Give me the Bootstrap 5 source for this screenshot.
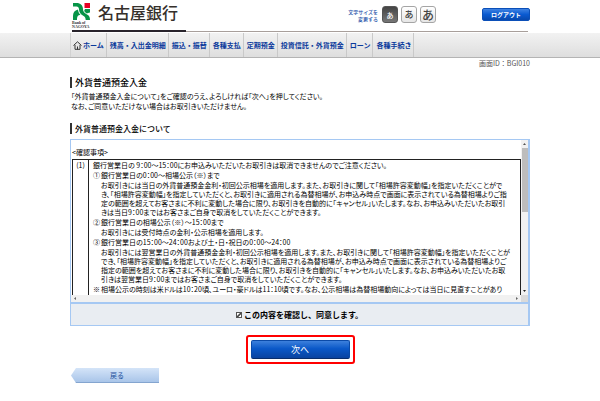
<!DOCTYPE html>
<html lang="ja">
<head>
<meta charset="utf-8">
<meta name="viewport" content="width=device-width, initial-scale=1">
<title>外貨普通預金入金</title>
<link href="https://cdn.jsdelivr.net/npm/bootstrap@5.3.0/dist/css/bootstrap.min.css" rel="stylesheet">
<style>
body{font-family:"Noto Sans CJK JP",sans-serif;font-size:7px;line-height:9px;color:#000;background:#fff}
.page-width{width:100%;max-width:460px;margin:0 auto}
.site-head{height:30px;padding:0 0 0 2px}
.bank-logo{color:#35302b;text-decoration:none;gap:5px;padding-top:2px}
.bank-name{font-size:16px;line-height:20px;font-weight:500}
.logo-mark{width:21px}
.logo-sub{font:700 4px/4px "Liberation Serif",serif;color:#333;margin-top:1px}
.rule{height:2px;margin:0 2px;background:linear-gradient(#a89f9b,#a89f9b) 0 1px/100% 1px no-repeat}
.rule div{height:2px;width:25%;background:#29242c}
.head-tools{margin-right:46px;gap:3px;padding-top:2px}
.size-label{font-size:5px;line-height:7px;color:#1c4fa8;text-align:right;margin:2px 1px 0 0;font-weight:500}
.size-btn{width:16px;height:17px;border:1px solid #a5a5a5;border-radius:3px;background:linear-gradient(#fff,#e6e6e6);color:#444;padding:0;line-height:14px;font-weight:500}
.size-s{font-size:7px;background:linear-gradient(#444,#777);color:#fff;border-color:#555}
.size-m{font-size:9px}.size-l{font-size:12px}
.logout{width:48px;height:13px;border:1px solid #0b4fb8;border-radius:2px;background:linear-gradient(#3f83e3,#0a5ad0 50%,#0848ad);color:#fff;font-size:6px;line-height:10px;font-weight:700;padding:0}
.main-nav{height:25px;margin-top:1px;background:linear-gradient(#f2f2f2,#dedede);border-bottom:1px solid #b4b4b4}
.main-nav ul{border-left:1px solid #d2d2d2}
.main-nav a{display:flex;align-items:center;height:24px;padding:0 2px 0 3px;border-right:1px solid #c9c9c9;color:#0b3a9c;font-weight:700;white-space:nowrap;text-decoration:none}
.main-nav a.home{padding:0 2px}
.main-nav a svg{margin-right:1px}
.screen-id{text-align:right;font-size:7px;color:#555;padding-top:1px}
.bar-title{border-left:2px solid #333;padding-left:3px;margin:0;font-weight:400;line-height:11px}
.title-lg{font-size:9px;margin-top:9px;font-weight:500}
.title-md{font-size:8px;margin-top:12px;font-weight:500}
.snug{font-feature-settings:"palt"}
.intro{margin:3px 0 0 1px;line-height:10px}
.agree-box{border:1px solid #a5c8f3;margin-top:5px;border-right-width:2px}
.terms{display:grid;grid-template-columns:minmax(0,1fr) 7px;grid-template-rows:155px 7px}
.terms-view{overflow:hidden;padding:8px 0 0 1px}
.terms-table{width:100%;border-collapse:collapse;margin-top:2px}
.terms-table td,.terms-table th{border:1px solid #222;border-width:1px 1px 0;vertical-align:top;padding:1px 4px;font-weight:400}
.terms-table th{width:16px;padding:1px;text-align:center}
.term-lines{display:flex;flex-direction:column;gap:1px;white-space:nowrap}
.term-lines p{margin:0}
.numbered{display:flex}
.numbered span{width:8px}
.inset{padding-left:8px}
.vbar{background:#f1f1f1;display:flex;flex-direction:column;align-items:center;gap:3px;padding:3px 0}
.vbar .thumb{width:6px;height:64px;background:#bdbdbd}
.hbar{background:#f1f1f1;display:flex;align-items:center;justify-content:space-between;padding:0 3px}
.corner{background:#dadada}
.consent{height:23px;border-top:2px solid #a5c8f3;background:#e9edf2;font-size:8px;font-weight:700;gap:2px}
.consent input{appearance:none;width:6px;height:6px;margin:0;border:1px solid #555;background:#fff}
.consent input:checked{background:linear-gradient(135deg,#fff 30%,#444 45%,#444 60%,#fff 70%)}
.next-frame{border:2px solid #f00;border-radius:3px;padding:3px;width:109px;margin:9px auto 0}
.next-btn{display:block;width:100%;height:19px;border:1px solid #0a4aa8;border-bottom-color:#092d6b;border-radius:2px;background:linear-gradient(#3c80dc,#0a58c8 45%,#0a43a0);color:#fff;font-size:9px;line-height:16px;padding:0}
.back-btn{display:block;width:88px;height:15px;margin:4px 0 0 1px;border:0;border-bottom:1px solid #84a5cf;background:linear-gradient(#d4e4f8,#a9c5e9);clip-path:polygon(5px 0,100% 0,100% 100%,5px 100%,0 50%);color:#1c4f9c;font-size:7px;line-height:14px;padding:0 0 0 4px}
</style>
<script src="https://cdn.jsdelivr.net/npm/bootstrap@5.3.0/dist/js/bootstrap.bundle.min.js"></script>
</head>
<body>
<header>
  <div class="page-width">
    <div class="site-head d-flex align-items-start">
      <a href="#" class="bank-logo d-flex">
        <span class="logo-mark d-block">
          <svg class="d-block" width="19" height="18" viewBox="0 0 19 18" aria-hidden="true">
            <path fill="#079447" d="M1 1h3.500C8.500 1 11 3.500 11 7.200v.3C11 9.500 13 11.500 15 12.500c2 1 3 2.500 3 5.500h-4.300c0-2-.7-3.300-2.500-4.300C8.500 12.200 7 10 7 7.500 7 5.500 6 4.500 4.500 4.500H1zM1 18v-4c0-3.500 1.500-5.500 5-6.500.2 2 1 4 2.500 5.200C6 13 5 14 5 18zM13 7h5v3.500c-1.500.2-2.500.5-3.200 1-1.300-.8-2.300-1.700-2.600-2.700z"/>
            <path fill="#e60024" d="M12.500 1h5.500v5h-5.500z"/>
          </svg>
          <span class="logo-sub d-block">Bank of<br>NAGOYA</span>
        </span>
        <span class="bank-name">名古屋銀行</span>
      </a>
      <div class="ms-auto d-flex pt-1">
        <div class="head-tools d-flex">
          <div class="size-label">文字サイズを<br>変更する</div>
          <button type="button" class="size-btn size-s">あ</button>
          <button type="button" class="size-btn size-m">あ</button>
          <button type="button" class="size-btn size-l">あ</button>
        </div>
        <button type="button" class="logout mt-1">ログアウト</button>
      </div>
    </div>
    <div class="rule"><div></div></div>
  </div>
  <nav class="main-nav">
    <div class="page-width">
      <ul class="list-unstyled d-flex mb-0">
        <li><a href="#" class="home"><svg width="9" height="9" viewBox="0 0 9 9" fill="none" stroke="#333" aria-hidden="true"><path d="M.5 4.500L4.500.8l4 3.700M2 4v4.300h5V4M4.500 5.500v3"/></svg>ホーム</a></li>
        <li><a href="#">残高・入出金明細</a></li>
        <li><a href="#">振込・振替</a></li>
        <li><a href="#">各種支払</a></li>
        <li><a href="#">定期預金</a></li>
        <li><a href="#">投資信託・外貨預金</a></li>
        <li><a href="#">ローン</a></li>
        <li><a href="#">各種手続き</a></li>
      </ul>
    </div>
  </nav>
</header>
<main class="page-width">
  <div class="screen-id">画面ID：BGI010</div>
  <h1 class="bar-title title-lg">外貨普通預金入金</h1>
  <p class="intro snug">「外貨普通預金入金について」をご確認のうえ、よろしければ「次へ」を押してください。<br>なお、ご同意いただけない場合はお取引きいただけません。</p>
  <h2 class="bar-title title-md">外貨普通預金入金について</h2>
  <form>
    <div class="agree-box">
      <div class="terms">
        <div class="terms-view snug">
          <div>&lt;確認事項&gt;</div>
          <table class="terms-table">
            <tr>
              <th scope="row">(1)</th>
              <td><div class="term-lines">
                <p>銀行営業日の 9：00～15：00にお申込みいただいたお取引きは取消できませんのでご注意ください。</p>
                <p class="numbered"><span>①</span>銀行営業日の0：00～相場公示（※）まで</p>
                <p class="inset">お取引きには当日の外貨普通預金金利・初回公示相場を適用します。また、お取引きに関して「相場許容変動幅」を指定いただくことがで<br>き、「相場許容変動幅」を指定していただくと、お取引きに適用される為替相場が、お申込み時点で画面に表示されている為替相場よりご指<br>定の範囲を超えてお客さまに不利に変動した場合に限り、お取引きを自動的に「キャンセル」いたします。なお、お申込みいただいたお取引<br>きは当日9：00まではお客さまご自身で取消をしていただくことができます。</p>
                <p class="numbered"><span>②</span>銀行営業日の相場公示（※）～15：00まで</p>
                <p class="inset">お取引きには受付時点の金利・公示相場を適用します。</p>
                <p class="numbered"><span>③</span>銀行営業日の15：00～24：00および土・日・祝日の0：00～24：00</p>
                <p class="inset">お取引きには翌営業日の外貨普通預金金利・初回公示相場を適用します。また、お取引きに関して「相場許容変動幅」を指定いただくことが<br>でき、「相場許容変動幅」を指定していただくと、お取引きに適用される為替相場が、お申込み時点で画面に表示されている為替相場よりご<br>指定の範囲を超えてお客さまに不利に変動した場合に限り、お取引きを自動的に「キャンセル」いたします。なお、お申込みいただいたお取<br>引きは翌営業日9：00まではお客さまご自身で取消をしていただくことができます。</p>
                <p class="numbered"><span>※</span>相場公示の時刻は米ドルは10：20頃、ユーロ・豪ドルは11：10頃です。なお、公示相場は為替相場動向によっては当日に見直すことがあり</p>
              </div></td>
            </tr>
          </table>
        </div>
        <div class="vbar" aria-hidden="true">
          <svg width="3" height="2" viewBox="0 0 3 2"><path d="M0 2L1.500 0 3 2z" fill="#555"/></svg>
          <div class="thumb"></div>
          <svg class="mt-auto" width="3" height="2" viewBox="0 0 3 2"><path d="M0 0h3L1.500 2z" fill="#222"/></svg>
        </div>
        <div class="hbar" aria-hidden="true">
          <svg width="2" height="3" viewBox="0 0 2 3"><path d="M2 0v3L0 1.500z" fill="#666"/></svg>
          <svg width="2" height="3" viewBox="0 0 2 3"><path d="M0 0l2 1.500L0 3z" fill="#666"/></svg>
        </div>
        <div class="corner"></div>
      </div>
      <div class="consent d-flex align-items-center justify-content-center">
        <input type="checkbox" id="agree" checked><label for="agree">この内容を確認し、同意します。</label>
      </div>
    </div>
    <div class="next-frame"><button type="button" class="next-btn">次へ</button></div>
    <button type="button" class="back-btn">戻る</button>
  </form>
</main>
</body>
</html>
